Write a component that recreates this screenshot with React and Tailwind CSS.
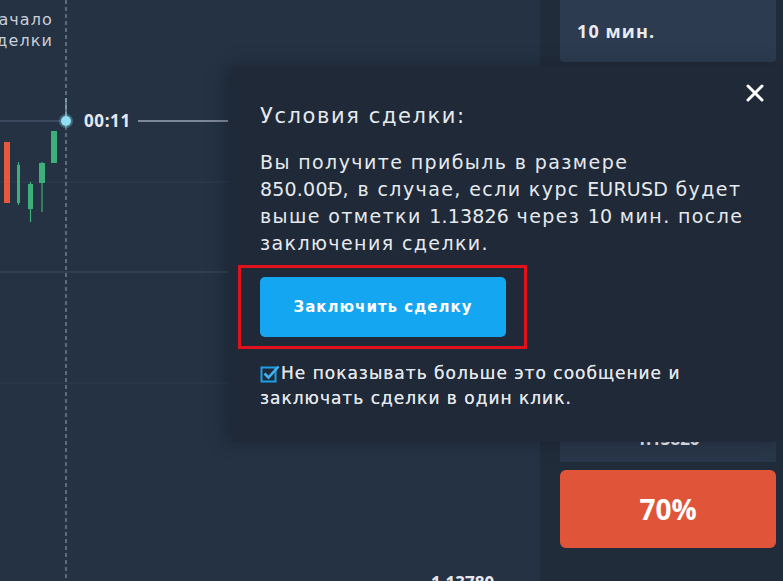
import React from "react";

const openSans = { fontFamily: '"Open Sans", "Noto Sans", sans-serif' };
const dejavu = { fontFamily: '"DejaVu Sans", "Noto Sans", sans-serif' };

function Chart() {
  return (
    <svg className="absolute inset-0" width="540" height="581" viewBox="0 0 540 581">
      {/* grid lines */}
      <line x1="0" y1="182" x2="228" y2="182" stroke="#2e3d51" strokeWidth="1" />
      <line x1="0" y1="272" x2="228" y2="272" stroke="#3a4a5e" strokeWidth="1" />
      <line x1="0" y1="383" x2="228" y2="383" stroke="#2c3a4d" strokeWidth="1" />
      {/* price line */}
      <line x1="0" y1="121" x2="60" y2="121" stroke="#44536a" strokeWidth="1.5" />
      <line x1="138" y1="121" x2="228" y2="121" stroke="#9aa5b3" strokeWidth="1.5" />
      {/* dashed vertical */}
      <line x1="66" y1="0" x2="66" y2="581" stroke="#6a7a8e" strokeWidth="1.6" strokeDasharray="4 3" />
      <line x1="66" y1="98" x2="66" y2="121" stroke="#9fc9d8" strokeWidth="1" />
      {/* candles */}
      <rect x="4" y="142" width="6" height="61" fill="#e55a3c" />
      <line x1="18.5" y1="162" x2="18.5" y2="205" stroke="#3daf78" strokeWidth="1.2" />
      <rect x="17" y="165" width="3" height="38" fill="#3daf78" />
      <line x1="30.5" y1="182" x2="30.5" y2="222" stroke="#3daf78" strokeWidth="1.2" />
      <rect x="28" y="184" width="5" height="25" fill="#3daf78" />
      <line x1="42" y1="162" x2="42" y2="212" stroke="#3daf78" strokeWidth="1.2" />
      <rect x="39" y="163" width="6" height="20" fill="#3daf78" />
      <rect x="51" y="131" width="6" height="32" fill="#3daf78" />
      {/* dot */}
      <circle cx="66" cy="121" r="7" fill="#8fe0f0" opacity="0.3" />
      <circle cx="66" cy="121" r="5" fill="#8fe0f0" />
    </svg>
  );
}

function CheckIcon() {
  return (
    <svg width="20" height="20" viewBox="0 0 20 20" className="shrink-0">
      <rect x="1.5" y="3.5" width="14" height="14" fill="none" stroke="#1d9fe6" strokeWidth="2" />
      <path d="M4.5 9.5 L8.5 13.5 L18.5 2.5" fill="none" stroke="#3fb2f2" strokeWidth="2.6" />
    </svg>
  );
}

function N({ children }) {
  return <span className="tracking-[0.2px]">{children}</span>;
}

export default function App() {
  return (
    <div className="relative flex w-[783px] h-[581px] overflow-hidden bg-[#243244]" style={openSans}>
      {/* chart canvas */}
      <div className="relative w-[540px] h-full shrink-0">
        <Chart />
        <div
          className="absolute right-[487px] top-[9px] text-right text-[16px] leading-[21px] tracking-[1.1px] text-[#c9cfd7] whitespace-nowrap"
          style={dejavu}
        >
          Начало<br />сделки
        </div>
        <div className="absolute left-[84px] top-[109px] text-[17px] font-bold leading-6 tracking-[0.6px] text-[#e4e8ee]">00:11</div>
        <div className="absolute left-[431px] top-[571px] text-[17px] font-bold leading-6 text-[#e4e8ee]">1.13780</div>
      </div>

      {/* right panel */}
      <div className="flex w-[243px] flex-col bg-[#212c3b] pl-[20px] pr-[7px]">
        <div className="flex h-[62px] items-center rounded-b-sm bg-[#2c3b50] pl-[17px] text-[18px] font-bold tracking-[1.1px] text-[#e8ebef]">
          10 мин.
        </div>
        <div className="mt-[358px] flex h-[42px] justify-center bg-[#29374a] pt-[7px] text-[17px] font-bold leading-6 text-[#e8ebef]">
          1.13826
        </div>
        <div className="mt-[8px] flex h-[78px] items-center justify-center rounded-md bg-[#e0553a] text-[28px] font-bold text-white">
          70%
        </div>
      </div>

      {/* popup */}
      <div
        className="absolute left-[232px] top-[66px] h-[376px] w-[551px] bg-[#1f2937] pl-[28px] pt-[36px] shadow-[-6px_0_18px_rgba(0,0,0,0.25)]"
        style={dejavu}
      >
        <button className="absolute right-[19px] top-[18px] flex h-[18px] w-[18px] items-center justify-center">
          <svg width="18" height="18" viewBox="0 0 18 18">
            <path d="M2 2 L16 16 M16 2 L2 16" stroke="#ffffff" strokeWidth="3" strokeLinecap="round" />
          </svg>
        </button>
        <div className="text-[21px] leading-[28px] tracking-[1.6px] text-[#e6e9ed]">Условия сделки:</div>
        <div className="mt-[19px] text-[19px] leading-[27px] tracking-[1.4px] text-[#e6e9ed] whitespace-nowrap">
          Вы получите прибыль в размере<br />
          <N>850.00Ð</N>, в случае, если курс <N>EURUSD</N> будет<br />
          выше отметки <N>1.13826</N> через <N>10</N> мин. после<br />
          заключения сделки.
        </div>
        <div className="-ml-[22px] mt-[8px] w-[289px] border-[3px] border-[#e3111c] pb-[9px] pl-[19px] pr-[18px] pt-[9px]">
          <button className="flex h-[60px] w-[246px] items-center justify-center rounded-[5px] bg-[#14a6f0] text-[15px] font-bold tracking-[1px] text-white">
            Заключить сделку
          </button>
        </div>
        <div className="mt-[12px] text-[17px] leading-[25px] tracking-[1px] text-[#e2e6eb] [text-shadow:0_0_0.4px_#e2e6eb]">
          <div className="flex items-center">
            <CheckIcon />
            <span className="ml-[1px]">Не показывать больше это сообщение и</span>
          </div>
          <div>заключать сделки в один клик.</div>
        </div>
      </div>
    </div>
  );
}
